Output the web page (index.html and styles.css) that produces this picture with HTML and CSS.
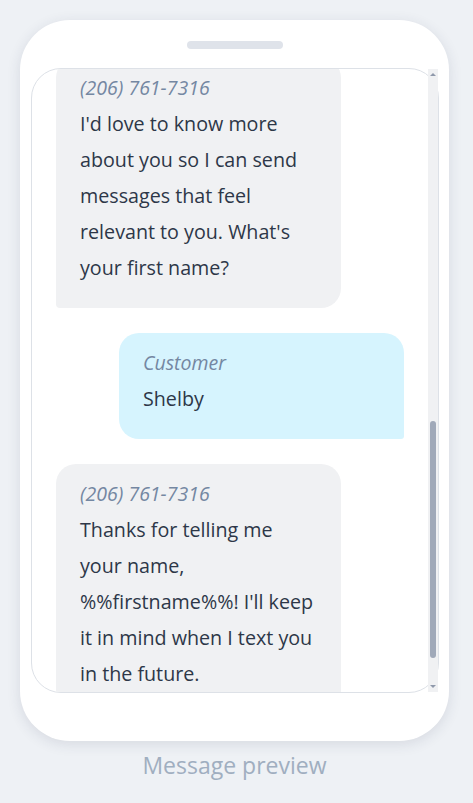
FILE: index.html
```html
<!DOCTYPE html>
<html lang="en">
<head>
<meta charset="utf-8">
<title>Message preview</title>
<link rel="stylesheet" href="styles.css">
</head>
<body>
<div class="preview">
  <div class="phone">
    <div class="notch"></div>
    <div class="screen">
      <div class="thread">
        <div class="messages">
          <div class="bubble incoming">
            <div class="sender">(206) 761-7316</div>
            <div class="text">I'd love to know more about you so I can send messages that feel relevant to you. What's your first name?</div>
          </div>
          <div class="bubble outgoing">
            <div class="sender">Customer</div>
            <div class="text">Shelby</div>
          </div>
          <div class="bubble incoming">
            <div class="sender">(206) 761-7316</div>
            <div class="text">Thanks for telling me your name, %%firstname%%! I'll keep it in mind when I text you in the future.</div>
          </div>
        </div>
      </div>
      <div class="scrollbar">
        <div class="arrow up"></div>
        <div class="track"><div class="thumb"></div></div>
        <div class="arrow down"></div>
      </div>
    </div>
  </div>
  <div class="caption">Message preview</div>
</div>
</body>
</html>
```

FILE: styles.css
```css
* { box-sizing: border-box; }
html, body { margin: 0; }
body {
  background: #eef1f5;
  font-family: "Open Sans", "Noto Sans", sans-serif;
  min-height: 803px;
}
.preview {
  width: 429px;
  margin-left: 20px;
  padding-top: 20px;
}
.phone {
  background: #fff;
  border-radius: 50px;
  box-shadow: 0 3px 14px rgba(40, 52, 80, 0.12);
  height: 721px;
  padding: 21px 10px 48px 11px;
  display: flex;
  flex-direction: column;
}
.notch {
  align-self: center;
  width: 96px;
  height: 8px;
  border-radius: 4px;
  background: #dfe3ea;
  margin-bottom: 19px;
}
.screen {
  height: 625px;
  border: 1px solid #dde1e7;
  border-radius: 30px;
  display: flex;
}
.thread {
  flex: 1;
  overflow: hidden;
}
.messages {
  margin-top: -11px;
  display: flex;
  flex-direction: column;
  gap: 25px;
}
.bubble {
  width: 285px;
  padding: 12px 24px 22px;
  border-radius: 20px;
}
.incoming {
  background: #f0f1f3;
  margin-left: 24px;
  border-bottom-left-radius: 4px;
}
.outgoing {
  background: #d6f4fe;
  align-self: flex-end;
  margin-right: 24px;
  border-bottom-right-radius: 3px;
}
.sender {
  font-style: italic;
  font-size: 19.5px;
  line-height: 36px;
  color: #7487a2;
}
.text {
  font-size: 19.7px;
  line-height: 36px;
  color: #2d3748;
}
.scrollbar {
  width: 10px;
  background: #f0f1f3;
  display: flex;
  flex-direction: column;
}
.arrow {
  height: 11px;
  display: flex;
  align-items: center;
  justify-content: center;
}
.arrow::before {
  content: "";
  border-left: 3px solid transparent;
  border-right: 3px solid transparent;
}
.arrow.up::before { border-bottom: 3px solid #8f99ab; }
.arrow.down::before { border-top: 3px solid #8f99ab; }
.track {
  flex: 1;
  padding: 0 2px;
}
.thumb {
  margin-top: 341px;
  height: 237px;
  border-radius: 3px;
  background: #a0a9b9;
}
.caption {
  margin-top: 9px;
  text-align: center;
  font-size: 23px;
  line-height: 30px;
  color: #a0aec0;
}
```
